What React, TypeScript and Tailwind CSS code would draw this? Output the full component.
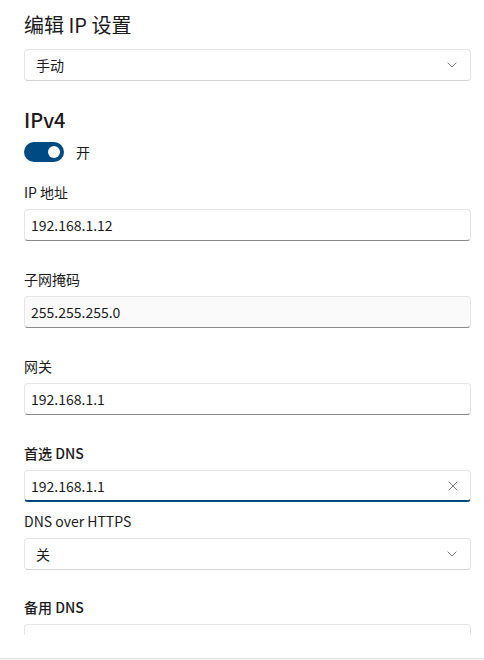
import { ChevronDown, X } from "lucide-react"
import type { ReactNode } from "react"

function FieldLabel({ children, strong }: { children: ReactNode; strong?: boolean }) {
  return (
    <div className={`h-5 text-[14px] leading-5 text-[#1b1b1b] ${strong ? "font-medium" : ""}`}>{children}</div>
  )
}

function TextBox({ value, muted, focused }: { value: string; muted?: boolean; focused?: boolean }) {
  return (
    <div
      className={`mt-[7px] flex h-8 items-center rounded-[4px] border border-[#e5e5e5] pl-[6px] pr-[9px] text-[14px] text-[#1a1a1a] ${
        focused ? "border-b-2 border-b-[#004a83] bg-white" : "border-b-[#8a8a8a]"
      } ${muted ? "bg-[#fafafa]" : "bg-white"}`}
    >
      <span className="flex-1 leading-5">{value}</span>
      {focused && <X size={16} strokeWidth={1.2} className="text-[#5c5c5c]" />}
    </div>
  )
}

function ComboBox({ value, className = "" }: { value: string; className?: string }) {
  return (
    <div
      className={`flex h-8 items-center rounded-[4px] border border-[#e5e5e5] border-b-[#d2d2d2] bg-white pl-[11px] pr-[10px] text-[14px] text-[#1a1a1a] ${className}`}
    >
      <span className="flex-1 leading-5">{value}</span>
      <ChevronDown size={16} strokeWidth={1.3} className="text-[#5f5f5f]" />
    </div>
  )
}

export default function App() {
  return (
    <div className="flex h-[660px] w-[484px] flex-col bg-white font-['Noto_Sans_CJK_SC','Noto_Sans',sans-serif]">
      <div className="h-[635px] overflow-hidden pl-6 pr-[13px] pt-[11px]">
        <h1 className="h-7 text-[20px] leading-7 text-[#1a1a1a]">编辑 IP 设置</h1>
        <ComboBox value="手动" className="mt-[10px]" />

        <h2 className="mt-[25px] h-7 text-[20px] font-medium leading-7 text-[#1a1a1a]">IPv4</h2>
        <div className="mt-2 flex h-5 items-center gap-3">
          <div className="flex h-5 w-10 items-center justify-end rounded-full bg-[#004a83] pr-1">
            <div className="h-3 w-3 rounded-full bg-white" />
          </div>
          <span className="text-[14px] leading-5 text-[#1a1a1a]">开</span>
        </div>

        <div className="mt-5">
          <FieldLabel>IP 地址</FieldLabel>
          <TextBox value="192.168.1.12" />
        </div>

        <div className="mt-7">
          <FieldLabel>子网掩码</FieldLabel>
          <TextBox value="255.255.255.0" muted />
        </div>

        <div className="mt-7">
          <FieldLabel>网关</FieldLabel>
          <TextBox value="192.168.1.1" />
        </div>

        <div className="mt-7">
          <FieldLabel strong>首选 DNS</FieldLabel>
          <TextBox value="192.168.1.1" focused />
        </div>

        <div className="mt-[9px]">
          <FieldLabel>DNS over HTTPS</FieldLabel>
          <ComboBox value="关" className="mt-[7px]" />
        </div>

        <div className="mt-[27px]">
          <FieldLabel strong>备用 DNS</FieldLabel>
          <TextBox value="" />
        </div>
      </div>
      <div className="flex-1" />
      <div className="h-[2px] border-t border-[#e5e5e5] bg-[#f3f3f3]" />
    </div>
  )
}
